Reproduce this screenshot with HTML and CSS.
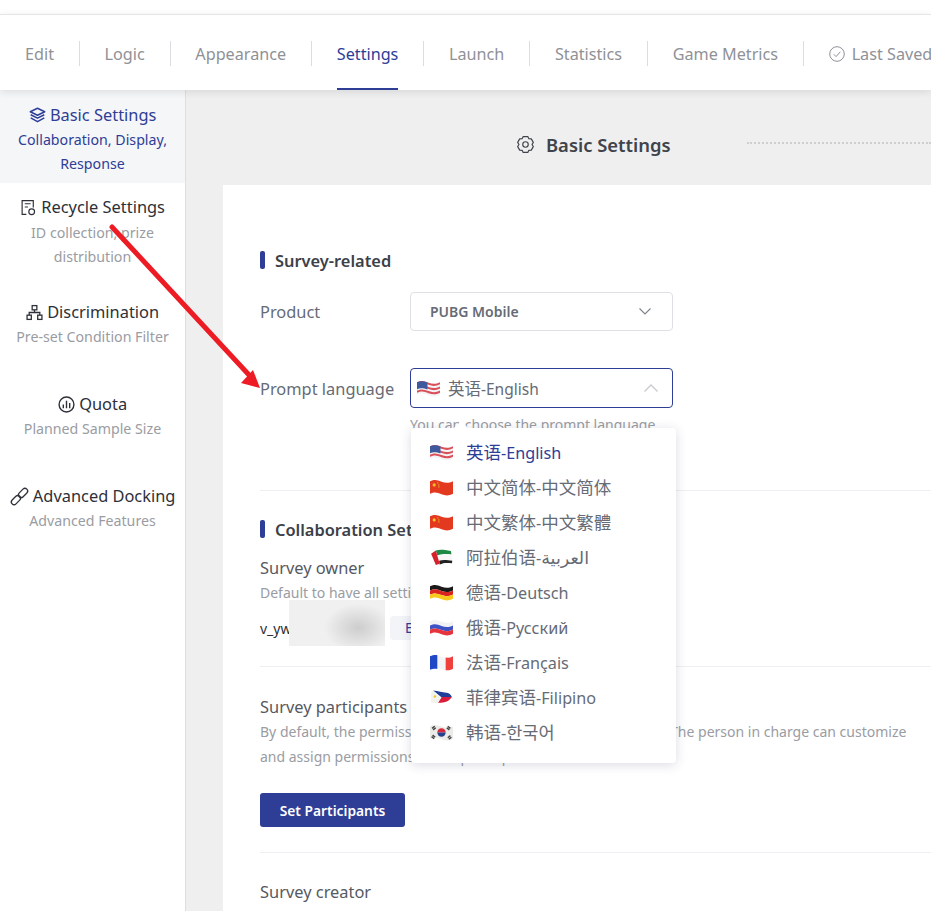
FILE: index.html
```html
<!DOCTYPE html>
<html lang="en">
<head>
    <meta charset="UTF-8">
    <meta name="viewport" content="width=device-width, initial-scale=1.0">
    <title>Basic Settings</title>
    <link rel="stylesheet" href="styles.css">
</head>
<body>
    <!-- flag symbols -->
    <svg class="defs" aria-hidden="true">
        <symbol id="flag-us" viewBox="1 1.5 22 15">
            <path fill="#f4f4f6" d="M1 3c5-2 7-1 11 .5s7 1.500 11-.5v12c-4 2-7 2-11 .5s-6-2.500-11-.5z"/>
            <path fill="#d9505a" d="M1 3c5-2 7-1 11 .5s7 1.500 11-.5v2c-4 2-7 2-11 .5s-6-2.500-11-.5z"/>
            <path fill="#d9505a" d="M1 7c5-2 7-1 11 .5s7 1.500 11-.5v2c-4 2-7 2-11 .5s-6-2.500-11-.5z"/>
            <path fill="#d9505a" d="M1 11c5-2 7-1 11 .5s7 1.500 11-.5v2c-4 2-7 2-11 .5s-6-2.500-11-.5z"/>
            <path fill="#3f5a9c" d="M1 3c4-1.600 6-1.200 10 .2v6.800c-4-1.400-6-1.800-10-.2z"/>
        </symbol>
        <symbol id="flag-cn" viewBox="1 1.5 22 15">
            <path fill="#e2391f" d="M1 3c5-2 7-1 11 .5s7 1.500 11-.5v12c-4 2-7 2-11 .5s-6-2.500-11-.5z"/>
            <circle cx="5" cy="6.500" r="1.500" fill="#f6c22a"/>
            <circle cx="8.500" cy="4.500" r=".6" fill="#f6c22a"/>
            <circle cx="9.500" cy="6.500" r=".6" fill="#f6c22a"/>
            <circle cx="9.500" cy="8.500" r=".6" fill="#f6c22a"/>
        </symbol>
        <symbol id="flag-ae" viewBox="0 0 24 18">
            <path fill="#f6f6f6" d="M7 5c5-2 9-1 16 0v9c-6 .5-11 0-14 2z"/>
            <path fill="#1c8a44" d="M6 1.500c5-1.500 9-.5 16 .5l.5 3.500c-6-.5-10-.5-15 1z"/>
            <path fill="#222" d="M9.500 12.500c4-1.500 8-1 14 0l-.5 2.500c-6-.5-9-.500-13 1.500z"/>
            <path fill="#d6202a" d="M1 5l5-3.500 4 14-4 1.500z"/>
        </symbol>
        <symbol id="flag-de" viewBox="1 1.5 22 15">
            <path fill="#1a1a1a" d="M1 3c5-2 7-1 11 .5s7 1.500 11-.5v4c-4 2-7 2-11 .5s-6-2.500-11-.5z"/>
            <path fill="#d8231f" d="M1 7c5-2 7-1 11 .5s7 1.500 11-.5v4c-4 2-7 2-11 .5s-6-2.500-11-.5z"/>
            <path fill="#f8c91d" d="M1 11c5-2 7-1 11 .5s7 1.500 11-.5v4c-4 2-7 2-11 .5s-6-2.500-11-.5z"/>
        </symbol>
        <symbol id="flag-ru" viewBox="1 1.5 22 15">
            <path fill="#f2f2f5" d="M1 3c5-2 7-1 11 .5s7 1.500 11-.5v4c-4 2-7 2-11 .5s-6-2.500-11-.5z"/>
            <path fill="#3d52c4" d="M1 7c5-2 7-1 11 .5s7 1.500 11-.5v4c-4 2-7 2-11 .5s-6-2.500-11-.5z"/>
            <path fill="#e5343c" d="M1 11c5-2 7-1 11 .5s7 1.500 11-.5v4c-4 2-7 2-11 .5s-6-2.500-11-.5z"/>
        </symbol>
        <symbol id="flag-fr" viewBox="1 1.5 22 15">
            <path fill="#f4f4f6" d="M1 3c5-2 7-1 11 .5s7 1.500 11-.5v12c-4 2-7 2-11 .5s-6-2.500-11-.5z"/>
            <path fill="#1f47c6" d="M1 3c3-1.200 5-1.300 7-1v13.200c-2-.5-4-.4-7 .8z"/>
            <path fill="#f0403c" d="M16 4.300c2.500.4 4.500 0 7-1.300v12c-2.500 1.300-4.500 1.700-7 1.300z"/>
        </symbol>
        <symbol id="flag-ph" viewBox="0 0 24 18">
            <path fill="#1f3f9a" d="M3 1.500c6 .5 10 2 14 2.500 2 .2 4 .5 6 4.500l-11 .5z"/>
            <path fill="#dc1c3c" d="M23 8.500c-2 3-4 4.500-8 5.500-2 .5-5 .5-7 .5l4-6z"/>
            <path fill="#f3f3ee" d="M1 3l2-1.500 9 7.500-4 6c-3-.5-5-.5-7-.5z"/>
            <circle cx="5" cy="8" r="1.300" fill="#f2c22c"/>
        </symbol>
        <symbol id="flag-kr" viewBox="1 1.5 22 15">
            <path fill="#ebebe8" d="M1 3c5-2 7-1 11 .5s7 1.500 11-.5v12c-4 2-7 2-11 .5s-6-2.500-11-.5z"/>
            <path fill="#d8283c" d="M8 9a4 4 0 0 1 8 0z"/>
            <path fill="#24408e" d="M8 9a4 4 0 0 0 8 0z"/>
            <g stroke="#444" stroke-width="1.400">
                <path d="M3 5l2.500-2M4 6.500l2.500-2"/>
                <path d="M18 3l2.500 2M17 4.500l2.500 2"/>
                <path d="M3.500 11.500l2.500 2M2.500 13l2.500 2"/>
                <path d="M18 14l2.500-2M19 15.500l2.500-2"/>
            </g>
        </symbol>
    </svg>

    <div class="page">
        <div class="top-strip"></div>

        <nav class="tabs">
            <a class="tab">Edit</a><i class="tab-sep"></i>
            <a class="tab">Logic</a><i class="tab-sep"></i>
            <a class="tab">Appearance</a><i class="tab-sep"></i>
            <a class="tab active">Settings</a><i class="tab-sep"></i>
            <a class="tab">Launch</a><i class="tab-sep"></i>
            <a class="tab">Statistics</a><i class="tab-sep"></i>
            <a class="tab">Game Metrics</a><i class="tab-sep"></i>
            <a class="tab saved">
                <svg class="icon-saved" viewBox="0 0 16 16" fill="none" stroke="currentColor" stroke-width="1"><circle cx="8" cy="8" r="7.300"/><path d="M4.800 8.300l2.300 2.300 4.200-4.800"/></svg>
                Last Saved
            </a>
        </nav>

        <div class="layout">
            <aside class="sidebar">
                <div class="side-item active">
                    <div class="side-title">
                        <svg class="side-icon" viewBox="0 0 16 16" fill="none" stroke="currentColor" stroke-width="1.400" stroke-linejoin="round"><path d="M8 1.200l6.800 3.300L8 7.800 1.200 4.500z"/><path d="M1.600 7.300L8 10.500l6.400-3.200"/><path d="M1.600 10.300L8 13.800l6.400-3.500"/></svg>
                        Basic Settings
                    </div>
                    <div class="side-sub">Collaboration, Display, Response</div>
                </div>
                <div class="side-item recycle">
                    <div class="side-title">
                        <svg class="side-icon" viewBox="0 0 16 16" fill="none" stroke="currentColor" stroke-width="1.100"><path d="M6 14.500H2V1.500h10.500v6.500"/><path d="M4.500 4.500h5.500M4.500 7.500h3"/><circle cx="11" cy="12" r="2.700"/></svg>
                        Recycle Settings
                    </div>
                    <div class="side-sub">ID collection, prize distribution</div>
                </div>
                <div class="side-item">
                    <div class="side-title">
                        <svg class="side-icon" viewBox="0 0 16 16" fill="none" stroke="currentColor" stroke-width="1.200"><rect x="5.800" y="1.500" width="4.400" height="4"/><rect x="1" y="10.500" width="4" height="4"/><rect x="11" y="10.500" width="4" height="4"/><path d="M8 5.500V8M3 10.500V8h10v2.500"/></svg>
                        Discrimination
                    </div>
                    <div class="side-sub">Pre-set Condition Filter</div>
                </div>
                <div class="side-item">
                    <div class="side-title">
                        <svg class="side-icon" viewBox="0 0 16 16" fill="none" stroke="currentColor" stroke-width="1.300"><circle cx="8" cy="8" r="7"/><path d="M5 8v3.500M8 4.500v7M11 6.500v5"/></svg>
                        Quota
                    </div>
                    <div class="side-sub">Planned Sample Size</div>
                </div>
                <div class="side-item">
                    <div class="side-title">
                        <svg class="side-icon link" viewBox="0 0 16 16" fill="none" stroke="currentColor" stroke-width="1.100"><rect x="-4.500" y="-2.300" width="9" height="4.600" rx="2.300" transform="translate(5 11) rotate(-45)"/><rect x="-4.500" y="-2.300" width="9" height="4.600" rx="2.300" transform="translate(11 5) rotate(-45)"/></svg>
                        Advanced Docking
                    </div>
                    <div class="side-sub">Advanced Features</div>
                </div>
            </aside>

            <main class="main">
                <div class="main-head">
                    <svg class="icon-gear" viewBox="0 0 18 18" fill="none" stroke="currentColor" stroke-width="1.100" stroke-linejoin="round"><path d="M6.800 1.500h4.400l1 2 2.300.2 1.900 3.300-1.200 2 1.200 2-1.900 3.300-2.300.2-1 2H6.800l-1-2-2.300-.2L1.600 11l1.200-2-1.200-2 1.900-3.300 2.300-.2z"/><circle cx="9" cy="9" r="2.600"/></svg>
                    <h2 class="main-title">Basic Settings</h2>
                    <span class="dash-line"></span>
                </div>

                <div class="card">
                    <h3 class="section-title">Survey-related</h3>

                    <div class="form-row first">
                        <label class="form-label">Product</label>
                        <div class="select product">
                            <span>PUBG Mobile</span>
                            <svg class="chev" viewBox="0 0 12 7" fill="none" stroke="#7c8088" stroke-width="1.100"><path d="M.5 .5L6 6l5.500-5.500"/></svg>
                        </div>
                    </div>
                    <div class="form-row">
                        <label class="form-label">Prompt language</label>
                        <div class="select open">
                            <svg class="flag"><use href="#flag-us"/></svg>
                            <span class="select-value"><span class="zh">英语</span>-English</span>
                            <svg class="chev up" viewBox="0 0 14 8" fill="none" stroke="#c8cad0" stroke-width="1.300"><path d="M.5 7.500L7 1l6.500 6.500"/></svg>
                        </div>
                    </div>
                    <p class="hint">You can choose the prompt language</p>

                    <hr class="line first-line">

                    <h3 class="section-title">Collaboration Settings</h3>
                    <div class="field-name owner">Survey owner</div>
                    <div class="desc">Default to have all settings permissions</div>
                    <div class="owner-row">
                        <span class="owner-name">v_yw</span>
                        <span class="blur-box"></span>
                        <span class="tag">Edit</span>
                    </div>

                    <hr class="line owner-line">

                    <div class="field-name">Survey participants</div>
                    <div class="desc wide">By default, the permissions of persons are the same as owner. The person in charge can customize and assign permissions to the participants</div>
                    <button class="btn">Set Participants</button>

                    <hr class="line btn-line">

                    <div class="field-name creator">Survey creator</div>
                </div>
            </main>
        </div>

        <!-- opened language menu -->
        <div class="lang-menu">
            <i class="lang-caret"></i>
            <div class="lang-item active"><svg class="flag"><use href="#flag-us"/></svg><span><span class="zh">英语</span>-English</span></div>
            <div class="lang-item"><svg class="flag"><use href="#flag-cn"/></svg><span><span class="zh">中文简体</span>-<span class="zh">中文简体</span></span></div>
            <div class="lang-item"><svg class="flag"><use href="#flag-cn"/></svg><span><span class="zh">中文繁体</span>-<span class="zh">中文繁體</span></span></div>
            <div class="lang-item"><svg class="flag"><use href="#flag-ae"/></svg><span><span class="zh">阿拉伯语</span>-<span class="zh">العربية</span></span></div>
            <div class="lang-item"><svg class="flag"><use href="#flag-de"/></svg><span><span class="zh">德语</span>-Deutsch</span></div>
            <div class="lang-item"><svg class="flag"><use href="#flag-ru"/></svg><span><span class="zh">俄语</span>-Русский</span></div>
            <div class="lang-item"><svg class="flag"><use href="#flag-fr"/></svg><span><span class="zh">法语</span>-Français</span></div>
            <div class="lang-item"><svg class="flag"><use href="#flag-ph"/></svg><span><span class="zh">菲律宾语</span>-Filipino</span></div>
            <div class="lang-item"><svg class="flag"><use href="#flag-kr"/></svg><span><span class="zh">韩语</span>-<span class="zh">한국어</span></span></div>
        </div>

        <!-- red annotation arrow -->
        <svg class="annotation" viewBox="0 0 931 911">
            <path d="M112 227L250 376" stroke="#ed1c24" stroke-width="5" stroke-linecap="round"/>
            <path fill="#ed1c24" d="M260 388L241 383 253 370z"/>
        </svg>
    </div>
</body>
</html>
```

FILE: styles.css
```css
* {
    box-sizing: border-box;
}
html, body {
    margin: 0;
    height: 100%;
    overflow: hidden;
    background: #fff;
}
body {
    font-family: "Noto Sans", "Noto Sans CJK SC", "DejaVu Sans", sans-serif;
    color: #666b75;
}
.defs {
    display: none;
}
.page {
    position: relative;
    width: 931px;
    height: 911px;
    overflow: hidden;
}
.top-strip {
    height: 14px;
}

/* tabs */
.tabs {
    position: relative;
    z-index: 2;
    display: flex;
    align-items: center;
    gap: 24.8px;
    height: 76px;
    padding-left: 25px;
    background: #fff;
    border-top: 1px solid #e6e6e6;
    box-shadow: 0 2px 8px rgba(0,0,0,0.1);
    font-size: 16.2px;
    color: #8f9197;
    white-space: nowrap;
}
.tab {
    display: flex;
    align-items: center;
    align-self: stretch;
    padding-top: 4px;
    border-bottom: 2px solid transparent;
}
.tab.active {
    color: #2e3d96;
    border-bottom-color: #2e3d96;
}
.tab-sep {
    flex: none;
    width: 1px;
    height: 25px;
    margin-top: 1px;
    background: #dcdde3;
}
.icon-saved {
    width: 16px;
    height: 16px;
    margin-right: 7px;
}

.layout {
    display: flex;
    height: 821px;
}

/* sidebar */
.sidebar {
    flex: none;
    width: 186px;
    background: #fff;
    border-right: 1px solid #dddee2;
}
.side-item {
    padding: 12px 5px 6px;
    margin-bottom: 24px;
    text-align: center;
}
.side-item.active {
    padding: 12px 14px 7px;
    margin-bottom: 0;
    background: #f5f6f8;
    color: #2e3d96;
}
.side-item.recycle {
    padding: 11px 14px 7px;
    margin-bottom: 12px;
}
.side-item.recycle .side-sub {
    position: relative;
    top: 1px;
}
.side-title {
    font-size: 16.4px;
    line-height: 26px;
    color: #2d3038;
    white-space: nowrap;
}
.side-item.active .side-title,
.side-item.active .side-sub {
    color: #2e3d96;
}
.side-sub {
    font-size: 14.2px;
    line-height: 24px;
    color: #9a9ca3;
}
.side-icon {
    width: 17px;
    height: 17px;
    vertical-align: -3px;
}
.side-icon.link {
    width: 19px;
    height: 19px;
    vertical-align: -4px;
}

/* main area */
.main {
    flex: 1;
    min-width: 0;
    padding-left: 37px;
    background: #efefef;
}
.main-head {
    display: flex;
    align-items: center;
    height: 95px;
    padding: 13px 0 0 293px;
    color: #3f434b;
}
.icon-gear {
    flex: none;
    width: 19px;
    height: 19px;
    margin-right: 11px;
}
.main-title {
    margin: 0;
    font-size: 18.4px;
    font-weight: 600;
    white-space: nowrap;
}
.dash-line {
    flex: 1;
    margin: 0 0 3px 76px;
    border-top: 2px dotted #cfcfcf;
}

.card {
    height: 726px;
    padding: 64px 0 0 37px;
    background: #fff;
}
.section-title {
    margin: 0;
    padding-left: 15px;
    position: relative;
    font-size: 16.4px;
    line-height: 24px;
    font-weight: 600;
    color: #3c4048;
    white-space: nowrap;
}
.section-title::before {
    content: "";
    position: absolute;
    left: 0;
    top: 2px;
    width: 5px;
    height: 18px;
    border-radius: 2px;
    background: #2e3d96;
}
.form-row {
    display: flex;
    align-items: center;
    margin-top: 37px;
}
.form-row.first {
    margin-top: 19px;
}
.form-label {
    flex: none;
    width: 150px;
    font-size: 16.4px;
    white-space: nowrap;
}
.select {
    display: flex;
    align-items: center;
    width: 263px;
    height: 40px;
    padding: 0 14px 0 6px;
    border: 1px solid #2e3d96;
    border-radius: 4px;
    background: #fff;
    font-size: 15.5px;
}
.select.product {
    height: 39px;
    padding-left: 19px;
    border-color: #dfe0e6;
    font-size: 14px;
    font-weight: 600;
}
.select .chev {
    margin-left: auto;
    margin-right: 7px;
    width: 12px;
    height: 7px;
}
.select .chev.up {
    margin-right: 0;
    width: 14px;
    height: 8px;
}
.select-value {
    margin-left: 8px;
}
.select-value .zh {
    font-size: 16.5px;
}
.flag {
    flex: none;
    width: 23px;
    height: 17px;
}
.hint {
    margin: 7px 0 0 150px;
    font-size: 14px;
    line-height: 20px;
    color: #9a9ca3;
    white-space: nowrap;
}
.line {
    margin: 0;
    border: 0;
    border-top: 1px solid #eeeff2;
}
.first-line {
    margin: 55px 0 27px;
}
.field-name {
    font-size: 16.4px;
    line-height: 24px;
    color: #555962;
}
.field-name.owner {
    margin-top: 14px;
}
.field-name.creator {
    margin-top: 27px;
}
.desc {
    font-size: 14px;
    line-height: 25px;
    color: #9a9ca3;
}
.desc.wide {
    width: 655px;
}
.owner-row {
    position: relative;
    display: flex;
    align-items: center;
    height: 24px;
    margin-top: 11px;
    font-size: 14px;
    color: #2d3038;
}
.owner-name {
    width: 130px;
}
.blur-box {
    position: absolute;
    left: 29px;
    top: -16px;
    width: 96px;
    height: 46px;
    background: radial-gradient(ellipse 34px 24px at 72% 60%, #cdcdcd, rgba(240,240,240,0) 100%), #f0f0f0;
}
.tag {
    padding: 0 15px;
    line-height: 24px;
    border-radius: 4px;
    background: #f3f4f8;
    color: #2e3d96;
}
.owner-line {
    margin: 26px 0 28px;
}
.btn {
    display: block;
    width: 145px;
    height: 34px;
    margin-top: 24px;
    border: 0;
    border-radius: 3px;
    background: #2e3d96;
    color: #fff;
    font-family: inherit;
    font-size: 13.8px;
    font-weight: 600;
}
.btn-line {
    margin-top: 25px;
}

/* language menu */
.lang-menu {
    position: absolute;
    z-index: 3;
    left: 411px;
    top: 428px;
    width: 265px;
    padding: 7px 0 13px;
    border-radius: 4px;
    background: #fff;
    box-shadow: 0 2px 12px rgba(30,40,90,0.16);
}
.lang-caret {
    position: absolute;
    left: 45px;
    top: -5px;
    width: 10px;
    height: 10px;
    background: #fff;
    transform: rotate(45deg);
}
.lang-item {
    position: relative;
    display: flex;
    align-items: center;
    height: 35px;
    padding-left: 19px;
    font-size: 16.2px;
    line-height: 1;
    color: #666b75;
    white-space: nowrap;
}
.lang-item .zh {
    font-size: 17.5px;
}
.lang-item .flag {
    margin-right: 13px;
}
.lang-item.active {
    color: #2e3d96;
}
.annotation {
    position: absolute;
    z-index: 4;
    left: 0;
    top: 0;
    width: 931px;
    height: 911px;
    pointer-events: none;
}
```
